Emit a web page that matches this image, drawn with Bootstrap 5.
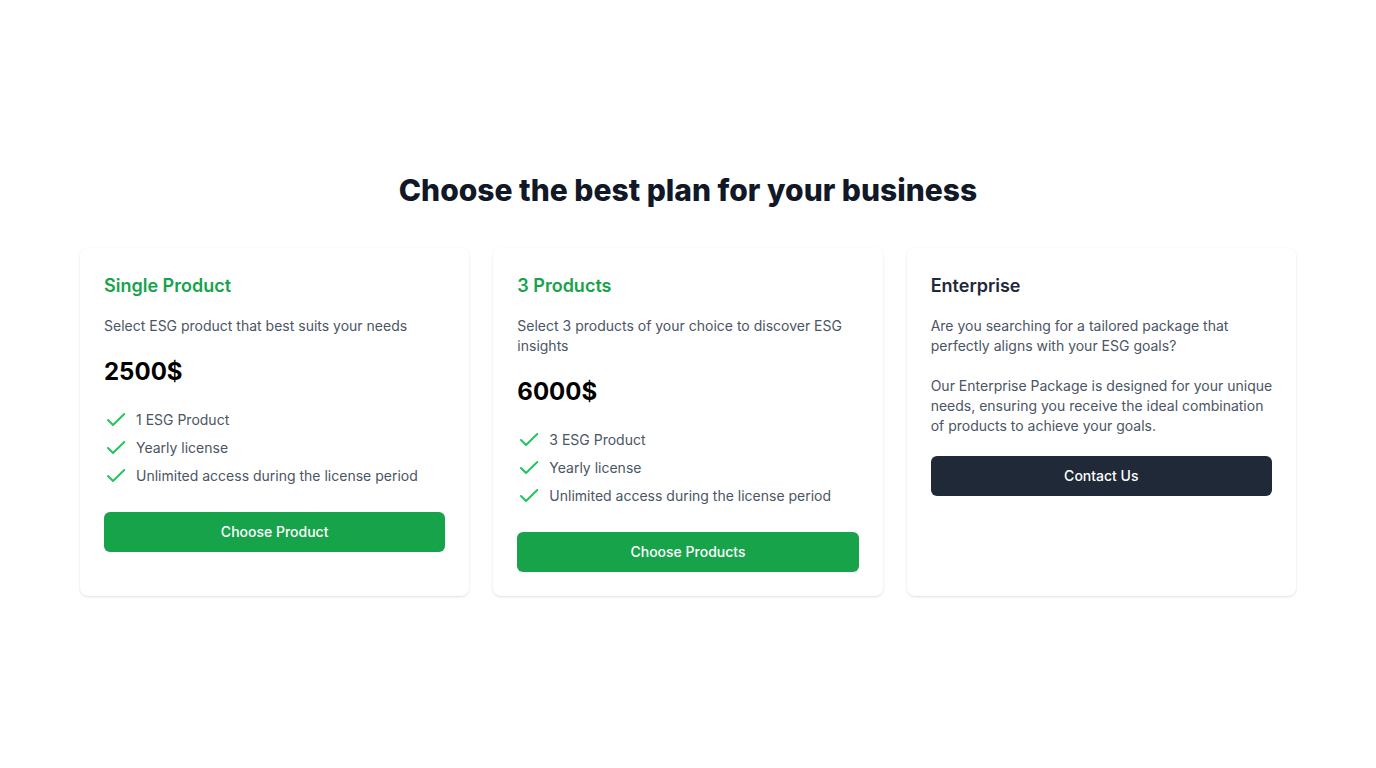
<!DOCTYPE html>
<html lang="en">
<head>
<meta charset="utf-8">
<meta name="viewport" content="width=device-width, initial-scale=1">
<title>Plans</title>
<link href="https://cdn.jsdelivr.net/npm/bootstrap@5.3.0/dist/css/bootstrap.min.css" rel="stylesheet">
<style>
  body { font-family: Inter, sans-serif; font-size: 14px; line-height: 20px; color: #4b5563; background: #fff; }
  .plans-title { font-size: 30px; line-height: 36px; font-weight: 800; color: #111827; margin-bottom: 40px; }
  .plan-wrap { padding: 0 80px; }
  .plan { border: 0; border-radius: 8px; box-shadow: 0 1px 3px 0 rgba(0,0,0,.1), 0 1px 2px -1px rgba(0,0,0,.1); color: inherit; }
  .plan-name { font-size: 18px; line-height: 28px; font-weight: 600; color: #1f2937; }
  .plan-name.brand { color: #16a34a; }
  .plan-text, .price { margin-bottom: 20px; }
  .price { font-size: 24px; line-height: 32px; font-weight: 700; color: #000; }
  .check { width: 24px; height: 24px; color: #22c55e; }
  .plan-btn { --bs-btn-font-size: 14px; --bs-btn-font-weight: 500; --bs-btn-line-height: 20px; --bs-btn-padding-y: 10px; --bs-btn-border-width: 0; --bs-btn-border-radius: 6px; --bs-btn-color: #fff; --bs-btn-hover-color: #fff; --bs-btn-bg: #16a34a; --bs-btn-hover-bg: #15803d; }
  .plan-btn.dark { --bs-btn-bg: #1f2937; --bs-btn-hover-bg: #111827; }
  .wide-break { display: none; }
  @media (min-width: 1360px) { .wide-break { display: inline; } .wide-lines { white-space: nowrap; } }
  @media (max-width: 767px) { .plan-wrap { padding: 24px; } }
</style>
</head>
<body>
<svg class="d-none" aria-hidden="true"><symbol id="check" viewBox="0 0 24 24"><path d="M4 12l5 5L20.300 6" fill="none" stroke="currentColor" stroke-width="2" stroke-linecap="round" stroke-linejoin="round"/></symbol></svg>
<main class="plan-wrap min-vh-100 d-flex flex-column justify-content-center">
  <h1 class="plans-title text-center">Choose the best plan for your business</h1>
  <div class="row row-cols-1 row-cols-md-3 gx-4 gy-4 gy-md-0">
    <div class="col">
      <section class="card plan h-100 p-4">
        <h2 class="plan-name brand mb-3">Single Product</h2>
        <p class="plan-text">Select ESG product that best suits your needs</p>
        <p class="price">2500$</p>
        <ul class="list-unstyled d-flex flex-column gap-1 mb-4">
          <li class="d-flex align-items-center gap-2"><svg class="check flex-shrink-0" aria-hidden="true"><use href="#check"/></svg>1 ESG Product</li>
          <li class="d-flex align-items-center gap-2"><svg class="check flex-shrink-0" aria-hidden="true"><use href="#check"/></svg>Yearly license</li>
          <li class="d-flex align-items-center gap-2"><svg class="check flex-shrink-0" aria-hidden="true"><use href="#check"/></svg>Unlimited access during the license period</li>
        </ul>
        <button type="button" class="btn plan-btn w-100">Choose Product</button>
      </section>
    </div>
    <div class="col">
      <section class="card plan h-100 p-4">
        <h2 class="plan-name brand mb-3">3 Products</h2>
        <p class="plan-text">Select 3 products of your choice to discover ESG insights</p>
        <p class="price">6000$</p>
        <ul class="list-unstyled d-flex flex-column gap-1 mb-4">
          <li class="d-flex align-items-center gap-2"><svg class="check flex-shrink-0" aria-hidden="true"><use href="#check"/></svg>3 ESG Product</li>
          <li class="d-flex align-items-center gap-2"><svg class="check flex-shrink-0" aria-hidden="true"><use href="#check"/></svg>Yearly license</li>
          <li class="d-flex align-items-center gap-2"><svg class="check flex-shrink-0" aria-hidden="true"><use href="#check"/></svg>Unlimited access during the license period</li>
        </ul>
        <button type="button" class="btn plan-btn w-100">Choose Products</button>
      </section>
    </div>
    <div class="col">
      <section class="card plan h-100 p-4">
        <h2 class="plan-name mb-3">Enterprise</h2>
        <p class="plan-text">Are you searching for a tailored package that perfectly aligns with your ESG goals?</p>
        <p class="plan-text wide-lines">Our Enterprise Package is designed for your unique <br class="wide-break">needs, ensuring you receive the ideal combination <br class="wide-break">of products to achieve your goals.</p>
        <button type="button" class="btn plan-btn dark w-100">Contact Us</button>
      </section>
    </div>
  </div>
</main>
<script src="https://cdn.jsdelivr.net/npm/bootstrap@5.3.0/dist/js/bootstrap.bundle.min.js"></script>
</body>
</html>
